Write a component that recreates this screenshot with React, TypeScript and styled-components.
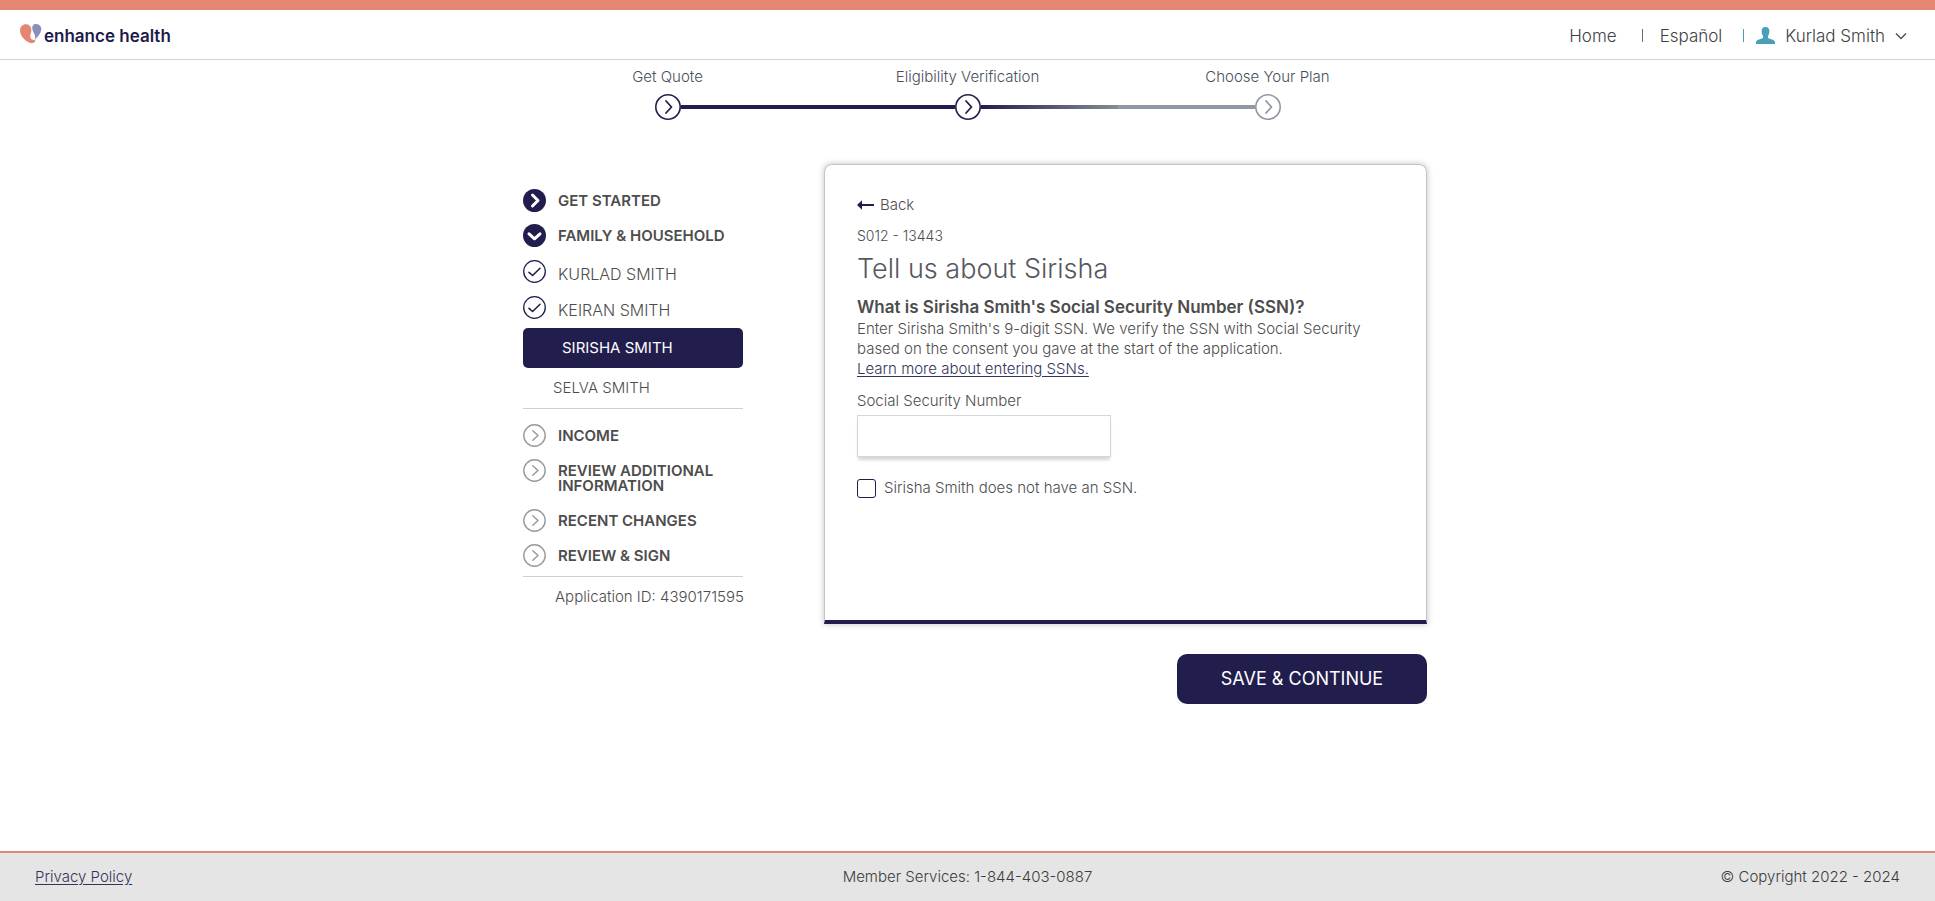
import React from "react";
import styled, { createGlobalStyle, css } from "styled-components";

const navy = "#211e4e";
const coral = "#e58672";
const ink = "#4d4d4d";
const line = "#cfcfcf";

const GlobalStyle = createGlobalStyle`
  *, *::before, *::after { box-sizing: border-box; }
  body {
    margin: 0;
    background: #fff;
    color: ${ink};
    font-family: Inter, "Open Sans", "Liberation Sans", sans-serif;
    font-size: 15px;
    font-weight: 300;
    line-height: 20px;
  }
  button, input { font: inherit; color: inherit; }
`;

const Page = styled.div`
  min-height: 100vh;
  display: flex;
  flex-direction: column;
`;

const Header = styled.header`
  border-top: 10px solid ${coral};
  border-bottom: 1px solid #d4d4d4;
  height: 60px;
  padding: 2px 28px 0 20px;
  display: flex;
  align-items: center;
  justify-content: space-between;
`;

const Brand = styled.a`
  display: flex;
  align-items: center;
  gap: 2px;
  color: #1d1a4b;
  font-size: 17px;
  font-weight: 600;
  text-decoration: none;

  svg { margin-bottom: 4px; }
`;

const Nav = styled.nav`
  display: flex;
  align-items: center;
  font-size: 17px;
`;

const NavLink = styled.a`
  color: #3f3f46;
  text-decoration: none;
`;

const Separator = styled.span<{ $before: number; $after: number; $color: string }>`
  width: 1px;
  height: 13px;
  margin: 0 ${(p) => p.$after}px 0 ${(p) => p.$before}px;
  background: ${(p) => p.$color};
`;

const UserButton = styled.button`
  display: flex;
  align-items: center;
  gap: 10px;
  border: 0;
  padding: 0;
  background: none;
  color: #3f3f46;
  cursor: pointer;
`;

const Stepper = styled.ol`
  width: 100%;
  max-width: 900px;
  margin: 0 auto;
  padding: 7px 0 0;
  list-style: none;
  display: grid;
  grid-template-columns: repeat(3, 1fr);
`;

const Step = styled.li`
  display: flex;
  flex-direction: column;
  align-items: center;
  gap: 7px;
`;

const StepLink = styled.a`
  color: #47505a;
  text-decoration: none;
`;

const Track = styled.div`
  width: 100%;
  display: flex;
  align-items: center;
  svg { flex: none; }
`;

const Rail = styled.span<{ $fill: string }>`
  flex: 1;
  height: 4px;
  background: ${(p) => p.$fill};
`;

const Main = styled.main`
  flex: 1;
  width: 100%;
  max-width: 919px;
  margin: 0 auto;
  padding: 44px 0 40px 15px;
  display: flex;
  align-items: flex-start;
  justify-content: space-between;
`;

const Sidebar = styled.aside`
  width: 220px;
  padding-top: 25px;
`;

const Group = styled.ul<{ $gap: number }>`
  margin: 0;
  padding: 0;
  list-style: none;
  display: flex;
  flex-direction: column;
  gap: ${(p) => p.$gap}px;
`;

const MemberGroup = styled(Group)`
  padding: 13px 0 9px;
`;

const SectionLink = styled.a`
  display: flex;
  align-items: flex-start;
  gap: 12px;
  color: ${ink};
  text-decoration: none;
  svg { flex: none; }
`;

const SectionName = styled.span`
  padding: 4px 0;
  font-weight: 600;
  line-height: 15px;
`;

const MemberName = styled.span`
  padding-top: 7px;
  font-size: 16px;
  line-height: 15px;
`;

const member = css`
  display: flex;
  align-items: center;
  height: 40px;
  text-decoration: none;
`;

const ActiveMember = styled.a`
  ${member}
  padding-left: 39px;
  border-radius: 5px;
  background: ${navy};
  color: #fff;
  font-weight: 400;
`;

const NextMember = styled.a`
  ${member}
  padding-left: 30px;
  color: ${ink};
`;

const UpcomingSections = styled.div`
  border: solid ${line};
  border-width: 1px 0;
  padding: 15px 0 9px;
`;

const ApplicationId = styled.p`
  margin: 10px 0 0 32px;
  white-space: nowrap;
`;

const FormColumn = styled.form`
  width: 603px;
  display: flex;
  flex-direction: column;
  align-items: flex-end;
  gap: 30px;
`;

const Card = styled.section`
  width: 100%;
  min-height: 460px;
  padding: 30px 32px;
  border: 1px solid #c4c4c4;
  border-bottom: 4px solid ${navy};
  border-radius: 8px 8px 0 0;
  box-shadow: 0 0 6px rgba(0, 0, 0, 0.25);
`;

const BackLink = styled.a`
  display: inline-flex;
  align-items: center;
  gap: 6px;
  color: ${ink};
  text-decoration: none;
`;

const ScreenCode = styled.p`
  margin: 11px 0 8px;
  font-size: 14px;
`;

const Title = styled.h1`
  margin: 0;
  color: #55585f;
  font-size: 27px;
  font-weight: 300;
  line-height: 30px;
`;

const Question = styled.h2`
  margin: 11px 0 0;
  font-size: 17px;
  font-weight: 600;
  line-height: 24px;
`;

const Help = styled.p`
  margin: 0;
`;

const UnderlinedLink = styled.a`
  color: #33345a;
  text-decoration: underline;
  text-underline-offset: 2px;
`;

const Field = styled.div`
  margin: 12px 0 21px;
  display: flex;
  flex-direction: column;
  align-items: flex-start;
  gap: 4px;
`;

const TextInput = styled.input`
  width: 254px;
  height: 42px;
  padding: 0 10px;
  border: 1px solid #d5d8d8;
  background: #fff;
  box-shadow: 0 4px 3px -1px rgba(0, 0, 0, 0.16);
`;

const CheckRow = styled.label`
  display: flex;
  align-items: center;
  gap: 8px;
`;

const Checkbox = styled.input`
  appearance: none;
  width: 19px;
  height: 19px;
  margin: 0;
  border: 1px solid ${navy};
  border-radius: 3px;
  background: #fff;
  &:checked { background: ${navy}; }
`;

const SaveButton = styled.button`
  width: 250px;
  height: 50px;
  border: 0;
  border-radius: 10px;
  background: ${navy};
  color: #fff;
  font-size: 18px;
  font-weight: 400;
  cursor: pointer;
`;

const Footer = styled.footer`
  height: 50px;
  padding: 0 35px;
  border-top: 2px solid ${coral};
  background: #e5e5e5;
  color: #3c3c3c;
  display: grid;
  grid-template-columns: 1fr auto 1fr;
  align-items: center;
`;

const Copyright = styled.span`
  text-align: right;
`;

const Logo = () => (
  <svg width="22" height="20" viewBox="0 0 22 20" aria-hidden="true">
    <path
      d="M6 .3C2.400.3 0 3 0 6.500C0 12.500 6.500 18.500 11.500 19.200C14 19.400 15.400 18 15.300 15.600C12 16.800 10 14.500 10.300 11.500C10.500 9.500 11.600 8 11.400 5.500C11.100 2.300 9 .3 6 .3Z"
      fill={coral}
    />
    <path
      d="M15.500 0C13 .2 11.900 2.200 12.300 5C12.700 8 14.900 9.500 15.100 12.500C15.200 13.800 15.100 14.500 14.900 15.500C18.500 12.500 21.300 8.500 21.300 4.800C21.300 1.800 18.600-.2 15.500 0Z"
      fill="#8b8fb8"
    />
  </svg>
);

const PersonIcon = () => (
  <svg width="19" height="17" viewBox="0 0 19 17" aria-hidden="true">
    <path
      d="M9.500 0C6.800 0 5.400 1.800 5.600 4.500C5.700 6.500 6.200 7.800 7 8.900V11C5.500 12 .4 12.300 0 15.200V17H19V15.200C18.600 12.300 13.500 12 12 11V8.900C12.800 7.800 13.300 6.500 13.400 4.500C13.600 1.800 12.200 0 9.500 0Z"
      fill="#4a9fb8"
    />
  </svg>
);

const ChevronDown = () => (
  <svg width="12" height="8" viewBox="0 0 12 8" fill="none" aria-hidden="true">
    <path d="M1 1.500L6 6.500L11 1.500" stroke="#555" strokeWidth="1.500" />
  </svg>
);

const StepIcon = ({ color }: { color: string }) => (
  <svg width="26" height="26" viewBox="0 0 26 26" fill="none" stroke={color} aria-hidden="true">
    <circle cx="13" cy="13" r="12.200" strokeWidth="1.600" fill="#fff" />
    <path d="M11 7L16.500 13L11 19" strokeWidth="1.800" strokeLinecap="round" strokeLinejoin="round" />
  </svg>
);

const SolidIcon = ({ down }: { down?: boolean }) => (
  <svg width="23" height="23" viewBox="0 0 23 23" fill="none" aria-hidden="true">
    <circle cx="11.500" cy="11.500" r="11.500" fill={navy} />
    <path
      d={down ? "M6 9.800L11.500 14.800L17 9.800" : "M9.500 6L15 11.500L9.500 17"}
      stroke="#fff"
      strokeWidth="3"
      strokeLinecap="round"
      strokeLinejoin="round"
    />
  </svg>
);

const CheckIcon = () => (
  <svg width="23" height="23" viewBox="0 0 23 23" fill="none" stroke={navy} aria-hidden="true">
    <circle cx="11.500" cy="11.500" r="10.800" strokeWidth="1.300" />
    <path d="M6 12.300L9.600 15.500L17 8.300" strokeWidth="1.600" strokeLinecap="round" strokeLinejoin="round" />
  </svg>
);

const PendingIcon = () => (
  <svg width="23" height="23" viewBox="0 0 23 23" fill="none" stroke="#999" aria-hidden="true">
    <circle cx="11.500" cy="11.500" r="10.700" strokeWidth="1.400" />
    <path d="M9.800 6.800L15 11.500L9.800 16.200" strokeWidth="1.500" strokeLinecap="round" strokeLinejoin="round" />
  </svg>
);

const BackArrow = () => (
  <svg width="17" height="10" viewBox="0 0 17 10" fill={navy} aria-hidden="true">
    <path d="M0 5L5 .3V3.900H17V6.100H5V9.700Z" />
  </svg>
);

const gray = "#9098a5";
const steps = [
  { name: "Get Quote", color: navy, before: "transparent", after: navy },
  {
    name: "Eligibility Verification",
    color: navy,
    before: navy,
    after: `linear-gradient(90deg, ${navy}, #858c92)`,
  },
  { name: "Choose Your Plan", color: gray, before: gray, after: "transparent" },
];

const startedSections = [
  { name: "GET STARTED", open: false },
  { name: "FAMILY & HOUSEHOLD", open: true },
];
const completedMembers = ["KURLAD SMITH", "KEIRAN SMITH"];
const upcoming = ["INCOME", "REVIEW ADDITIONAL INFORMATION", "RECENT CHANGES", "REVIEW & SIGN"];

export default function App() {
  return (
    <Page>
      <GlobalStyle />
      <Header>
        <Brand href="#">
          <Logo />
          enhance health
        </Brand>
        <Nav>
          <NavLink href="#">Home</NavLink>
          <Separator $before={25} $after={17} $color="#6b6b80" />
          <NavLink href="#">Español</NavLink>
          <Separator $before={21} $after={12} $color="#4a9fb8" />
          <UserButton type="button">
            <PersonIcon />
            Kurlad Smith
            <ChevronDown />
          </UserButton>
        </Nav>
      </Header>

      <Stepper>
        {steps.map((step) => (
          <Step key={step.name}>
            <StepLink href="#">{step.name}</StepLink>
            <Track>
              <Rail $fill={step.before} />
              <StepIcon color={step.color} />
              <Rail $fill={step.after} />
            </Track>
          </Step>
        ))}
      </Stepper>

      <Main>
        <Sidebar>
          <Group $gap={12}>
            {startedSections.map((section) => (
              <li key={section.name}>
                <SectionLink href="#">
                  <SolidIcon down={section.open} />
                  <SectionName>{section.name}</SectionName>
                </SectionLink>
              </li>
            ))}
          </Group>
          <MemberGroup $gap={13}>
            {completedMembers.map((name) => (
              <li key={name}>
                <SectionLink href="#">
                  <CheckIcon />
                  <MemberName>{name}</MemberName>
                </SectionLink>
              </li>
            ))}
          </MemberGroup>
          <ActiveMember href="#" aria-current="page">SIRISHA SMITH</ActiveMember>
          <NextMember href="#">SELVA SMITH</NextMember>
          <UpcomingSections>
            <Group $gap={12}>
              {upcoming.map((name) => (
                <li key={name}>
                  <SectionLink href="#">
                    <PendingIcon />
                    <SectionName>{name}</SectionName>
                  </SectionLink>
                </li>
              ))}
            </Group>
          </UpcomingSections>
          <ApplicationId>Application ID: 4390171595</ApplicationId>
        </Sidebar>

        <FormColumn onSubmit={(e) => e.preventDefault()}>
          <Card>
            <BackLink href="#">
              <BackArrow />
              Back
            </BackLink>
            <ScreenCode>S012 - 13443</ScreenCode>
            <Title>Tell us about Sirisha</Title>
            <Question>What is Sirisha Smith's Social Security Number (SSN)?</Question>
            <Help>
              Enter Sirisha Smith's 9-digit SSN. We verify the SSN with Social Security
              <br />
              based on the consent you gave at the start of the application.
              <br />
              <UnderlinedLink href="#">Learn more about entering SSNs.</UnderlinedLink>
            </Help>
            <Field>
              <label htmlFor="ssn">Social Security Number</label>
              <TextInput id="ssn" type="text" autoComplete="off" />
            </Field>
            <CheckRow htmlFor="no-ssn">
              <Checkbox id="no-ssn" type="checkbox" />
              Sirisha Smith does not have an SSN.
            </CheckRow>
          </Card>
          <SaveButton type="submit">SAVE &amp; CONTINUE</SaveButton>
        </FormColumn>
      </Main>

      <Footer>
        <span>
          <UnderlinedLink href="#">Privacy Policy</UnderlinedLink>
        </span>
        <span>Member Services: 1-844-403-0887</span>
        <Copyright>© Copyright 2022 - 2024</Copyright>
      </Footer>
    </Page>
  );
}
